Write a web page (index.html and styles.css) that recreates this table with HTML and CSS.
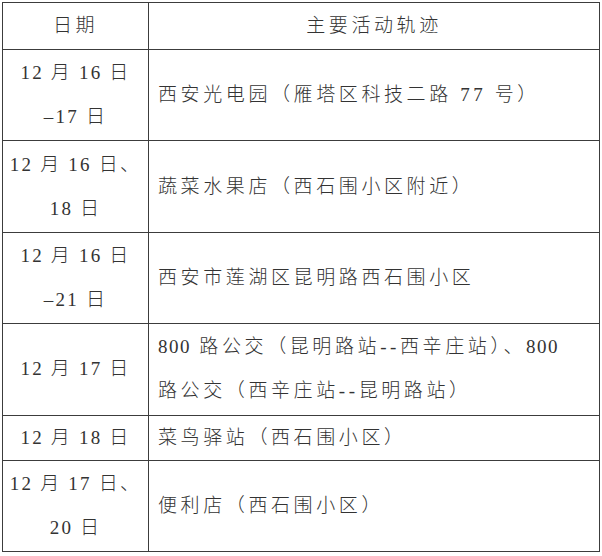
FILE: index.html
```html
<!DOCTYPE html>
<html lang="zh">
<head>
<meta charset="utf-8">
<link rel="stylesheet" href="styles.css">
</head>
<body>
<table class="trace">
  <colgroup><col class="c-date"><col class="c-place"></colgroup>
  <tr class="r-head">
    <th>日期</th>
    <th>主要活动轨迹</th>
  </tr>
  <tr class="r-2">
    <td class="date">12 月 16 日<br>–17 日</td>
    <td class="place">西安光电园（雁塔区科技二路 77 号）</td>
  </tr>
  <tr class="r-2">
    <td class="date">12 月 16 日、<br>18 日</td>
    <td class="place">蔬菜水果店（西石围小区附近）</td>
  </tr>
  <tr class="r-2">
    <td class="date">12 月 16 日<br>–21 日</td>
    <td class="place">西安市莲湖区昆明路西石围小区</td>
  </tr>
  <tr class="r-2">
    <td class="date">12 月 17 日</td>
    <td class="place"><span class="num">800</span> 路公交（昆明路站--西辛庄站）、<span class="num">800</span><br>路公交（西辛庄站--昆明路站）</td>
  </tr>
  <tr class="r-1">
    <td class="date">12 月 18 日</td>
    <td class="place">菜鸟驿站（西石围小区）</td>
  </tr>
  <tr class="r-2">
    <td class="date">12 月 17 日、<br>20 日</td>
    <td class="place">便利店（西石围小区）</td>
  </tr>
</table>
</body>
</html>
```

FILE: styles.css
```css
html, body {
  margin: 0;
  background: #ffffff;
}
body {
  padding: 2px 3px 2px 2px;
}
.trace {
  border-collapse: collapse;
  width: 598px;
  table-layout: fixed;
  font-family: "Liberation Serif", "Noto Sans CJK SC", serif;
  font-size: 19px;
  font-weight: 300;
  color: #333333;
  letter-spacing: 3.6px;
}
.c-date { width: 146px; }
.trace th, .trace td {
  border: 1.5px solid #3c3c3c;
  padding: 0;
  line-height: 44px;
  vertical-align: middle;
}
.trace th {
  font-weight: 300;
  text-align: center;
  height: 46px;
}
.r-2 td { height: 90.4px; }
.r-1 td { height: 43.6px; }
.trace td.date {
  text-align: center;
  white-space: nowrap;
  letter-spacing: 2.2px;
}
.trace td.place {
  text-align: left;
  padding-left: 9px;
  white-space: nowrap;
}
.num {
  letter-spacing: 1.5px;
}
```
